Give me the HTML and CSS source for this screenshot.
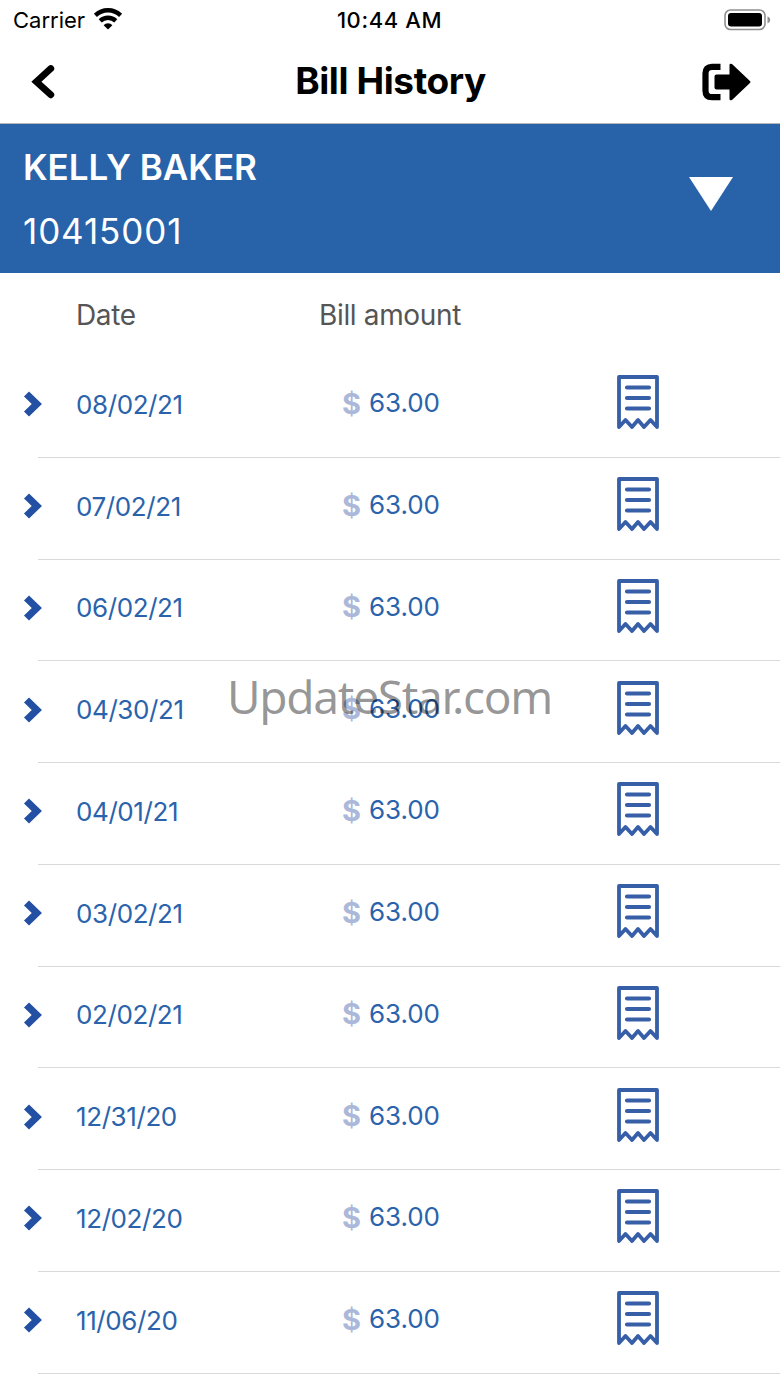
FILE: index.html
```
<!DOCTYPE html>
<html>
<head>
	<meta charset="utf-8">
	<title>Bill History</title>
	<link rel="stylesheet" href="styles.css">
</head>
<body>
	<svg class="sprite">
		<symbol id="arrow" viewBox="0 0 20 30">
			<path d="M4.5 5L14.8 15L4.5 25" fill="none" stroke="#2350a2" stroke-width="7.2" />
		</symbol>
		<symbol id="bill" viewBox="0 0 44 56">
			<path d="M3 53V3H41V53L34.5 46L28 53L22 46L16 53L9.5 46Z" fill="none" stroke="#365fa8" stroke-width="3.8" stroke-linejoin="round" />
			<path d="M11 13.5H33M11 24H33M11 34.5H33" stroke="#365fa8" stroke-width="4.2" stroke-linecap="round" />
		</symbol>
	</svg>

	<div class="status">
		<div class="carrier">
			<span class="carrier-name">Carrier</span>
			<svg class="wifi" width="30" height="22" viewBox="0 0 30 22">
				<path d="M2.4 7.4A18 18 0 0 1 27.6 7.4M7.2 12.8A11.3 11.3 0 0 1 22.8 12.8" fill="none" stroke="#000" stroke-width="4.4" />
				<path d="M15 21.5L10.6 17.2A6 6 0 0 1 19.4 17.2Z" />
			</svg>
		</div>
		<div class="time">10:44 AM</div>
		<svg class="battery" width="48" height="22" viewBox="0 0 48 22">
			<rect x="1" y="1" width="40" height="19.5" rx="5.5" fill="none" stroke="#8f8f8f" stroke-width="1.6" />
			<rect x="4" y="4" width="34" height="13.5" rx="3" />
			<path d="M43.5 7.2Q46.3 8.4 46.3 10.8T43.5 14.4Z" fill="#8f8f8f" />
		</svg>
	</div>

	<div class="nav">
		<svg class="back" width="26" height="36" viewBox="0 0 26 36">
			<path d="M20.8 4.6L6.4 17.7L20.8 30.8" fill="none" stroke="#000" stroke-width="6.8" stroke-linecap="round" />
		</svg>
		<h1 class="title">Bill History</h1>
		<svg class="logout" width="50" height="38" viewBox="0 0 50 38">
			<path d="M19.5 3.8H11Q4.5 3.8 4.5 10.3V27.7Q4.5 34.2 11 34.2H19.5" fill="none" stroke="#000" stroke-width="6.2" />
			<path d="M15.5 11.5H28.5V2Q28.5 0 31 1L49.2 18.2Q49.8 19 49.2 19.8L31 37Q28.5 38 28.5 36V26.5H15.5Q13.5 26.5 13.5 24.5V13.5Q13.5 11.5 15.5 11.5Z" />
		</svg>
	</div>

	<div class="account">
		<div>
			<div class="name">KELLY BAKER</div>
			<div class="number">10415001</div>
		</div>
		<svg class="down" width="44" height="34" viewBox="0 0 44 34">
			<path d="M0 0H44L22 34Z" fill="#fff" />
		</svg>
	</div>

	<div class="head">
		<span class="head-date">Date</span>
		<span class="head-amount">Bill amount</span>
	</div>

	<div class="list">
		<div class="row"><svg class="arrow"><use href="#arrow" /></svg><span class="date">08/02/21</span><span class="dollar">$</span><span class="amount">63.00</span><svg class="bill"><use href="#bill" /></svg></div>
		<div class="row"><svg class="arrow"><use href="#arrow" /></svg><span class="date">07/02/21</span><span class="dollar">$</span><span class="amount">63.00</span><svg class="bill"><use href="#bill" /></svg></div>
		<div class="row"><svg class="arrow"><use href="#arrow" /></svg><span class="date">06/02/21</span><span class="dollar">$</span><span class="amount">63.00</span><svg class="bill"><use href="#bill" /></svg></div>
		<div class="row"><svg class="arrow"><use href="#arrow" /></svg><span class="date">04/30/21</span><span class="dollar">$</span><span class="amount">63.00</span><svg class="bill"><use href="#bill" /></svg></div>
		<div class="row"><svg class="arrow"><use href="#arrow" /></svg><span class="date">04/01/21</span><span class="dollar">$</span><span class="amount">63.00</span><svg class="bill"><use href="#bill" /></svg></div>
		<div class="row"><svg class="arrow"><use href="#arrow" /></svg><span class="date">03/02/21</span><span class="dollar">$</span><span class="amount">63.00</span><svg class="bill"><use href="#bill" /></svg></div>
		<div class="row"><svg class="arrow"><use href="#arrow" /></svg><span class="date">02/02/21</span><span class="dollar">$</span><span class="amount">63.00</span><svg class="bill"><use href="#bill" /></svg></div>
		<div class="row"><svg class="arrow"><use href="#arrow" /></svg><span class="date">12/31/20</span><span class="dollar">$</span><span class="amount">63.00</span><svg class="bill"><use href="#bill" /></svg></div>
		<div class="row"><svg class="arrow"><use href="#arrow" /></svg><span class="date">12/02/20</span><span class="dollar">$</span><span class="amount">63.00</span><svg class="bill"><use href="#bill" /></svg></div>
		<div class="row"><svg class="arrow"><use href="#arrow" /></svg><span class="date">11/06/20</span><span class="dollar">$</span><span class="amount">63.00</span><svg class="bill"><use href="#bill" /></svg></div>
	</div>

	<div class="watermark">UpdateStar.com</div>
</body>
</html>
```
FILE: styles.css
```
*{
	box-sizing:border-box;
}
body{
	margin:0;
	height:1387px;
	overflow:hidden;
	background-color:white;
	font-family:Inter, "Liberation Sans", sans-serif;
	color:black;
}
svg{
	display:block;
}
.sprite{
	display:none;
}
.status{
	display:grid;
	grid-template-columns:1fr auto 1fr;
	align-items:center;
	height:40px;
	padding:0 8px 0 13px;
	font-size:22px;
}
.carrier{
	display:flex;
	align-items:center;
	gap:8px;
}
.wifi{
	margin-top:-3px;
}
.time{
	margin-right:6px;
	font-weight:500;
	letter-spacing:0.6px;
}
.battery{
	justify-self:end;
	margin-top:-1px;
}
.nav{
	display:grid;
	grid-template-columns:1fr auto 1fr;
	align-items:center;
	height:84px;
	padding:0 29px 0 30px;
	border-bottom:1px solid #b5b8b8;
}
.title{
	margin:-2px 0 0;
	font-size:37px;
	font-weight:700;
	letter-spacing:-0.4px;
}
.logout{
	justify-self:end;
}
.account{
	display:flex;
	justify-content:space-between;
	height:149px;
	padding:11px 47px 0 23px;
	background-color:#2862a9;
	color:white;
	font-size:35px;
	line-height:64px;
}
.name{
	font-weight:600;
}
.number{
	letter-spacing:0.9px;
}
.down{
	margin-top:42px;
}
.head{
	display:flex;
	height:83px;
	padding-left:76px;
	font-size:28px;
	line-height:84px;
	letter-spacing:-0.35px;
	color:#555;
}
.head-date{
	width:243px;
}
.row{
	display:grid;
	grid-template-columns:54px 266px 27px 247px 46px;
	align-items:center;
	height:101.75px;
	padding-left:22px;
	font-size:26px;
	color:#2a63ab;
	background:linear-gradient(#d9d9d9, #d9d9d9) 38px 100% / 100% 1px no-repeat;
}
.arrow{
	width:20px;
	height:30px;
	margin-top:-5px;
}
.date{
	margin-top:-5px;
	letter-spacing:-0.4px;
}
.dollar{
	margin-top:-7px;
	font-size:29px;
	font-weight:700;
	color:#acb8d9;
}
.amount{
	margin-top:-8px;
	letter-spacing:-0.1px;
}
.bill{
	width:44px;
	height:56px;
	margin-top:-9px;
}
.watermark{
	position:absolute;
	top:660px;
	left:0;
	width:779px;
	text-align:center;
	font-family:"Noto Sans", "Open Sans", sans-serif;
	font-size:46px;
	line-height:72px;
	letter-spacing:-1.3px;
	color:rgba(0,0,0,0.42);
}
```
